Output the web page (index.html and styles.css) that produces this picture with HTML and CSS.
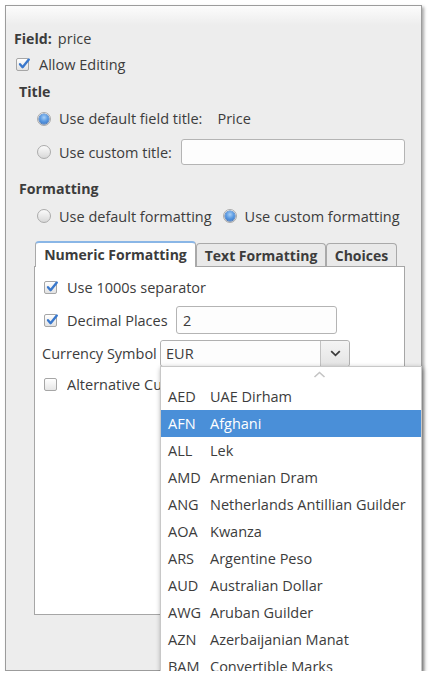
FILE: index.html
```html
<!DOCTYPE html>
<html>
<head>
<meta charset="utf-8">
<link rel="stylesheet" href="styles.css">
</head>
<body>
<div class="window">
  <div class="titlebar"></div>
  <div class="row r-field"><span class="b">Field:</span><span class="val">price</span></div>
  <div class="row r-allow"><span class="cb"><svg viewBox="0 0 14 14" width="14" height="14"><path d="M3 7.2 L5.6 10.2 L11.8 2.6" fill="none" stroke="#3a78cc" stroke-width="2.4" stroke-linecap="round" stroke-linejoin="round"/></svg></span><span class="cb-text">Allow Editing</span></div>
  <div class="row heading h-title">Title</div>
  <div class="row r-radio r-rad1"><span class="radio on"></span><span class="rad-text">Use default field title:</span><span class="price">Price</span></div>
  <div class="row r-radio r-rad2"><span class="radio"></span><span class="rad-text lbl-custom">Use custom title:</span><span class="entry entry-title"></span></div>
  <div class="row heading h-fmt">Formatting</div>
  <div class="row r-radio r-rad3"><span class="radio"></span><span class="rad-text">Use default formatting</span><span class="radio on r-second"></span><span class="rad-text">Use custom formatting</span></div>

  <div class="tabs">
    <div class="tab active">Numeric Formatting</div>
    <div class="tab t-text">Text Formatting</div>
    <div class="tab t-choices">Choices</div>
  </div>
  <div class="panel">
    <div class="prow p1"><span class="cb"><svg viewBox="0 0 14 14" width="14" height="14"><path d="M3 7.2 L5.6 10.2 L11.8 2.6" fill="none" stroke="#3a78cc" stroke-width="2.4" stroke-linecap="round" stroke-linejoin="round"/></svg></span><span class="cb-text">Use 1000s separator</span></div>
    <div class="prow p2"><span class="cb"><svg viewBox="0 0 14 14" width="14" height="14"><path d="M3 7.2 L5.6 10.2 L11.8 2.6" fill="none" stroke="#3a78cc" stroke-width="2.4" stroke-linecap="round" stroke-linejoin="round"/></svg></span><span class="cb-text dec-label">Decimal Places</span><span class="entry entry-dec">2</span></div>
    <div class="prow p3"><span class="cur-label">Currency Symbol</span>
      <div class="combo">
        <span class="combo-val">EUR</span>
        <span class="combo-btn"><svg width="11" height="7" viewBox="0 0 11 7"><polyline points="1.2,1.2 5.5,5.3 9.8,1.2" fill="none" stroke="#3c3c3c" stroke-width="1.8"/></svg></span>
        <div class="popup">
          <div class="pop-arrow"><svg width="13" height="7" viewBox="0 0 13 7"><polyline points="1.5,6 6.5,1.5 11.5,6" fill="none" stroke="#c4c4c4" stroke-width="1.6"/></svg></div>
          <div class="item"><span class="code">AED</span><span>UAE Dirham</span></div>
          <div class="item sel"><span class="code">AFN</span><span>Afghani</span></div>
          <div class="item"><span class="code">ALL</span><span>Lek</span></div>
          <div class="item"><span class="code">AMD</span><span>Armenian Dram</span></div>
          <div class="item"><span class="code">ANG</span><span>Netherlands Antillian Guilder</span></div>
          <div class="item"><span class="code">AOA</span><span>Kwanza</span></div>
          <div class="item"><span class="code">ARS</span><span>Argentine Peso</span></div>
          <div class="item"><span class="code">AUD</span><span>Australian Dollar</span></div>
          <div class="item"><span class="code">AWG</span><span>Aruban Guilder</span></div>
          <div class="item"><span class="code">AZN</span><span>Azerbaijanian Manat</span></div>
          <div class="item"><span class="code">BAM</span><span>Convertible Marks</span></div>
        </div>
      </div>
    </div>
    <div class="prow p4"><span class="cb cb-off"></span><span class="cb-text alt-text">Alternative Currency Symbol</span></div>
  </div>
</div>
</body>
</html>
```

FILE: styles.css
```css
* { box-sizing: border-box; }
html, body { margin: 0; padding: 0; background: #ffffff; }
body {
  font-family: "Open Sans", "Noto Sans", "DejaVu Sans", sans-serif;
  font-size: 14.5px;
  color: #3c3c3c;
}
.window {
  position: relative;
  margin: 5px 0 0 5px;
  width: 417px;
  height: 666px;
  border: 1px solid #9c9c9c;
  background: #ededed;
  box-shadow: 2px 2px 3px rgba(0,0,0,0.35);
}
.titlebar {
  height: 19px;
  background: linear-gradient(#fcfcfc, #ededed);
}
.row {
  display: flex;
  align-items: center;
  white-space: nowrap;
}
.r-field { height: 26px; padding-left: 8px; }
.b { font-weight: bold; font-size: 14.2px; }
.val { margin-left: 6px; }
.r-allow { height: 27px; padding-left: 10px; }
.heading { font-weight: bold; font-size: 14.2px; padding-left: 13px; }
.h-title { height: 27px; }
.r-radio { padding-left: 31px; }
.r-rad1 { height: 27px; }
.r-rad2 { height: 40px; }
.h-fmt { height: 32px; }
.r-rad3 { height: 24px; }

.cb {
  position: relative;
  flex: none;
  width: 13px;
  height: 13px;
  border: 1px solid #a6a6a6;
  border-radius: 2px;
  background: linear-gradient(#ffffff, #e2e2e2);
}
.cb svg { position: absolute; left: 0; top: -2px; }
.cb-text { margin-left: 10px; }

.radio {
  position: relative;
  flex: none;
  width: 14px;
  height: 14px;
  border-radius: 50%;
  border: 1px solid #ababab;
  background: linear-gradient(#fbfbfb, #d8d8d8);
}
.radio.on::after {
  content: "";
  position: absolute;
  left: 1px; top: 1px;
  width: 10px; height: 10px;
  border-radius: 50%;
  background: radial-gradient(circle at 50% 35%, #a9d0f7 0, #5d9ce3 45%, #2f6cc0 100%);
  box-shadow: 0 0 0 0.5px #3467ad;
}
.rad-text { margin-left: 8px; }
.price { margin-left: 15px; }
.lbl-custom { width: 122px; flex: none; }
.r-second { margin-left: 11px; }

.entry {
  display: flex;
  align-items: center;
  height: 26px;
  border: 1px solid #b4b4b4;
  border-radius: 3px;
  background: #fdfdfd;
  padding-left: 6px;
}
.entry-title { width: 224px; height: 26px; }

.tabs {
  display: flex;
  align-items: flex-end;
  margin: 13px 0 0 28px;
  height: 25px;
  padding-left: 1px;
}
.tab {
  font-weight: bold;
  font-size: 14px;
  height: 23px;
  display: flex;
  align-items: center;
  justify-content: center;
  border: 1px solid #a9a9a9;
  border-bottom: none;
  border-radius: 4px 4px 0 0;
  background: #e9e9e9;
  white-space: nowrap;
}
.tab.active {
  width: 161px;
  height: 26px;
  margin-bottom: -1px;
  background: #ffffff;
  border-top: 2px solid #8ab6e6;
  position: relative;
  z-index: 1;
  padding-bottom: 2px;
}
.t-text { width: 130px; }
.t-choices { width: 71px; }

.panel {
  margin-left: 28px;
  width: 371px;
  height: 349px;
  border: 1px solid #a6a6a6;
  background: #ffffff;
  padding-top: 7px;
}
.prow {
  display: flex;
  align-items: center;
  white-space: nowrap;
}
.p1 { height: 26px; padding-left: 9px; }
.p2 { height: 28px; padding-left: 9px; margin-top: 6px; }
.p3 { height: 26px; padding-left: 7px; margin-top: 6px; }
.p4 { height: 26px; padding-left: 9px; margin-top: 5px; }
.dec-label { width: 109px; flex: none; }
.entry-dec { width: 161px; height: 28px; }
.cur-label { width: 118px; flex: none; }
.cb-off { background: linear-gradient(#ffffff, #e6e6e6); }
.alt-text { width: 93px; overflow: hidden; }

.combo {
  position: relative;
  display: flex;
  width: 190px;
  height: 27px;
  border: 1px solid #b0b0b0;
  border-radius: 3px;
  background: linear-gradient(#fafafa, #eeeeee);
}
.combo-val {
  flex: 1;
  display: flex;
  align-items: center;
  padding-left: 5px;
  background: #fdfdfd;
  border-radius: 3px 0 0 3px;
}
.combo-btn {
  width: 29px;
  display: flex;
  align-items: center;
  justify-content: center;
  border-left: 1px solid #c2c2c2;
  background: linear-gradient(#f4f4f4, #e4e4e4);
  border-radius: 0 3px 3px 0;
}

.popup {
  position: absolute;
  left: -1px;
  top: 25px;
  width: 262px;
  height: 306px;
  overflow: hidden;
  background: #ffffff;
  border: 1px solid #c8c8c8;
  box-shadow: 1px 2px 5px rgba(0,0,0,0.4);
  z-index: 5;
}
.pop-arrow {
  height: 16px;
  display: flex;
  justify-content: flex-end;
  align-items: center;
  padding-right: 95px;
}
.item {
  display: flex;
  align-items: center;
  height: 27px;
  padding-left: 7px;
  white-space: nowrap;
  color: #3c3c3c;
}
.item.sel { background: #4a8fd8; color: #ffffff; }
.code { width: 42px; flex: none; }
```
